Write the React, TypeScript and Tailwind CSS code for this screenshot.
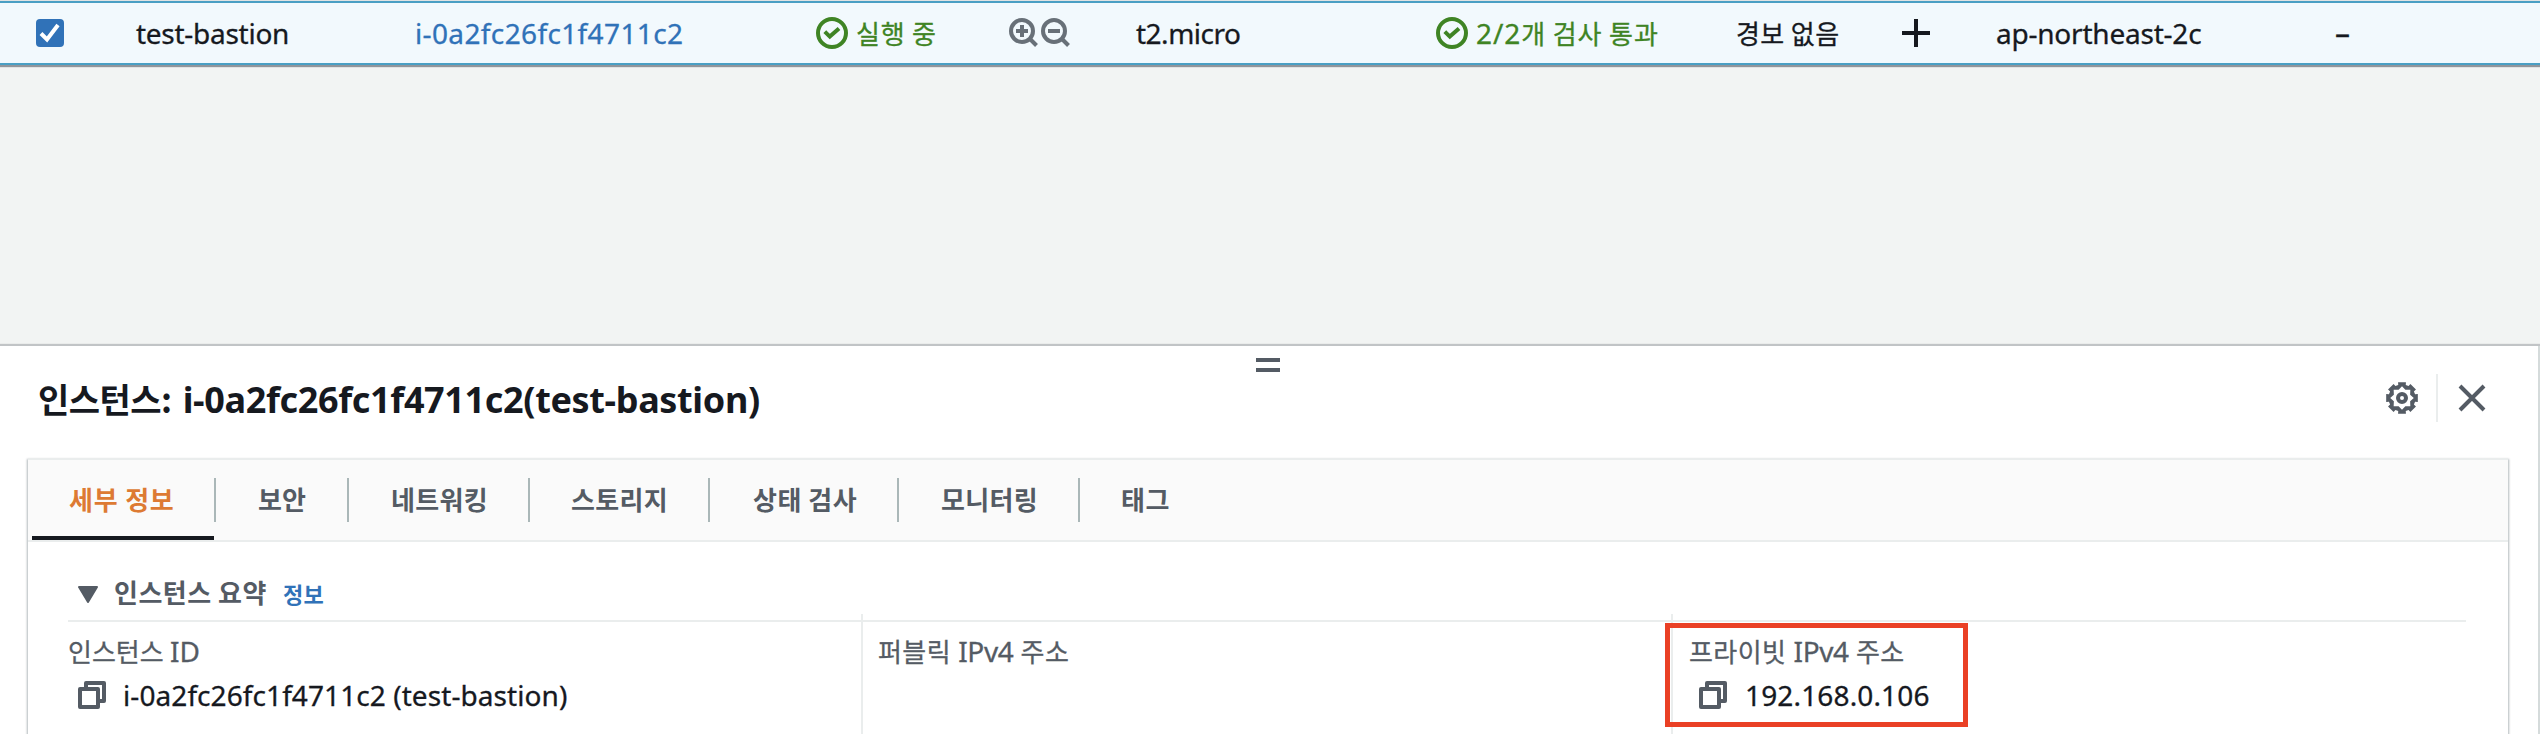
import type { ReactNode } from "react";

function CheckCircle() {
  return (
    <svg width="32" height="32" viewBox="0 0 32 32" fill="none" stroke="#3f8424" strokeWidth="4" className="shrink-0">
      <circle cx="16" cy="16" r="14" />
      <path d="M8.8 14.6l5 5L23 11.4" />
    </svg>
  );
}

function Magnifier({ plus = false }: { plus?: boolean }) {
  return (
    <svg width="30" height="30" viewBox="0 0 30 30" fill="none" stroke="#687078" strokeWidth="4" className="shrink-0">
      <circle cx="13" cy="13" r="11" />
      <path d="M20.5 20.5l7 7" />
      <path d="M7 13h12" />
      {plus && <path d="M13 7v12" />}
    </svg>
  );
}

const toPoints = (polar: number[][]) =>
  polar
    .map(([a, r]) => {
      const t = (a * Math.PI) / 180;
      return `${(16 + r * Math.cos(t)).toFixed(2)},${(16 + r * Math.sin(t)).toFixed(2)}`;
    })
    .join(" ");

const teeth = Array.from({ length: 8 }, (_, i) => i * 45);
const gearOutline = toPoints(teeth.flatMap((a) => [[a - 14, 16.3], [a + 14, 16.3], [a + 16, 13.6], [a + 29, 13.6]]));
const gearHollow = toPoints(teeth.flatMap((a) => [[a, 11.8], [a + 22.5, 8.8]]));

function Gear() {
  return (
    <svg width="32" height="32" viewBox="0 0 32 32">
      <polygon points={gearOutline} fill="#545b64" />
      <polygon points={gearHollow} fill="#fff" />
      <circle cx="16" cy="16" r="4" fill="none" stroke="#545b64" strokeWidth="4" />
    </svg>
  );
}

function CopyIcon() {
  return (
    <svg width="28" height="28" viewBox="0 0 28 28" fill="none" stroke="#545b64" strokeWidth="4" strokeLinejoin="round" className="shrink-0">
      <path d="M8 7V2h18v18h-5" />
      <path d="M2 8h18v18H2z" />
    </svg>
  );
}

function Ko({ children, className = "" }: { children: ReactNode; className?: string }) {
  return <span className={`font-['Noto_Sans_CJK_KR',sans-serif] text-[26px] ${className}`}>{children}</span>;
}

const tabs = [
  { label: "보안", width: "w-[133px]", pad: "pl-[42px]", track: "" },
  { label: "네트워킹", width: "w-[181px]", pad: "pl-[42px]", track: "tracking-[0.3px]" },
  { label: "스토리지", width: "w-[180px]", pad: "pl-[41px]", track: "tracking-[0.3px]" },
  { label: "상태 검사", width: "w-[189px]", pad: "pl-[43px]", track: "tracking-[0.5px]" },
  { label: "모니터링", width: "w-[181px]", pad: "pl-[42px]", track: "tracking-[0.3px]" },
  { label: "태그", width: "w-[120px]", pad: "pl-[41px]", track: "tracking-[0.5px]" },
];

function InstanceRow() {
  return (
    <div className="mt-px flex h-[64px] shrink-0 items-center whitespace-nowrap border-y-2 border-[#4a9fc4] bg-[#f2f9fd] pb-px leading-[40px] shadow-[0_1px_1px_1px_rgba(0,7,22,0.4)]">
      <div className="flex w-[136px] items-center pl-9">
        <span className="flex size-7 items-center justify-center rounded-[4px] bg-[#3072b8]">
          <svg width="28" height="28" viewBox="0 0 28 28" fill="none" stroke="#fff" strokeWidth="4">
            <path d="M5 14.5l6 6L22 6" />
          </svg>
        </span>
      </div>
      <div className="w-[279px] tracking-[-0.27px]">test-bastion</div>
      <div className="w-[401px] tracking-[0.37px] text-[#3072b8]">i-0a2fc26fc1f4711c2</div>
      <div className="flex w-[193px] items-center text-[#3f8424]">
        <CheckCircle />
        <Ko className="ml-2 tracking-[0.8px]">실행 중</Ko>
      </div>
      <div className="flex w-[127px] items-center gap-[2px]">
        <Magnifier plus />
        <Magnifier />
      </div>
      <div className="w-[300px] tracking-[-0.5px]">t2.micro</div>
      <div className="flex w-[300px] items-center text-[#3f8424]">
        <CheckCircle />
        <span className="ml-2 tracking-[0.9px]">2/2<Ko>개 검사 통과</Ko></span>
      </div>
      <div className="w-[166px]">
        <Ko className="tracking-[0.4px]">경보 없음</Ko>
      </div>
      <div className="w-[94px]">
        <svg width="28" height="28" viewBox="0 0 28 28" stroke="#16191f" strokeWidth="4">
          <path d="M0 14h28M14 0v28" />
        </svg>
      </div>
      <div className="w-[339px] tracking-[-0.22px]">ap-northeast-2c</div>
      <div className="text-[30px]">–</div>
    </div>
  );
}

export default function App() {
  return (
    <div className="flex h-[734px] w-[2540px] flex-col overflow-hidden bg-[#f2f4f3] font-['Noto_Sans','Noto_Sans_CJK_KR',sans-serif] text-[28px] text-[#16191f] [-webkit-text-stroke-width:0.3px]">
      <InstanceRow />

      <section className="mt-[281px] flex flex-1 flex-col border-r-2 border-[#d5dbdb] bg-white shadow-[0_-1px_1px_1px_rgba(0,7,22,0.2)]">
        <div className="flex h-[23px] flex-col items-center gap-[6px] pt-3">
          <span className="ml-[-2px] h-1 w-6 shrink-0 bg-[#545b64]" />
          <span className="ml-[-2px] h-1 w-6 shrink-0 bg-[#545b64]" />
        </div>

        <header className="flex h-[89px] items-start justify-between pl-[38px] pr-[52px] pt-[5px] [-webkit-text-stroke-width:0px]">
          <h2 className="flex items-baseline whitespace-nowrap text-[36px] font-bold leading-[50px]">
            <span className="font-['Noto_Sans_CJK_KR',sans-serif] text-[34px] tracking-[-0.5px]">인스턴스:</span>
            <span className="ml-[11px] tracking-[-0.35px]">i-0a2fc26fc1f4711c2(test-bastion)</span>
          </h2>
          <div className="flex h-12 items-center">
            <Gear />
            <span className="ml-[18px] mr-[20px] h-12 w-[2px] bg-[#eaeded]" />
            <svg width="28" height="28" viewBox="0 0 28 28" stroke="#545b64" strokeWidth="4">
              <path d="M2 2l24 24M26 2L2 26" />
            </svg>
          </div>
        </header>

        <div className="ml-7 mr-[30px] flex flex-1 flex-col border-t-2 border-[#eaeded] bg-white shadow-[0_2px_2px_1px_rgba(0,28,36,0.3)]">
          <nav className="flex h-[82px] shrink-0 items-center border-b-2 border-[#eaeded] bg-[#fafafa] pl-1 text-[26px] font-bold text-[#545b64] [-webkit-text-stroke-width:0px]">
            <div className="flex h-20 w-[182px] items-center border-b-4 border-[#16191f] pl-[37px]">
              <Ko className="tracking-[0.8px] text-[#dd7a33]">세부 정보</Ko>
            </div>
            {tabs.map((t) => (
              <div key={t.label} className={`flex h-11 items-center border-l-2 border-[#aab7b8] pb-[4px] ${t.pad} ${t.width}`}>
                <Ko className={t.track}>{t.label}</Ko>
              </div>
            ))}
          </nav>

          <div className="ml-10 mr-[42px] flex flex-1 flex-col">
            <div className="flex h-[80px] shrink-0 items-baseline whitespace-nowrap border-b-2 border-[#eaeded] pl-[10px] pt-[30px] font-bold leading-[40px] text-[#545b64] [-webkit-text-stroke-width:0px]">
              <svg width="20" height="17" viewBox="0 0 20 17" fill="#545b64" stroke="#545b64" strokeWidth="2" strokeLinejoin="round">
                <path d="M1 1h18L10 16z" />
              </svg>
              <Ko className="ml-4 tracking-[0.5px]">인스턴스 요약</Ko>
              <span className="ml-[16px] font-['Noto_Sans_CJK_KR',sans-serif] text-[22px] tracking-[0.4px] text-[#3072b8]">정보</span>
            </div>

            <div className="mt-[-8px] flex flex-1 whitespace-nowrap leading-[44px]">
              <div className="w-[793px] pt-[15px]">
                <div className="h-11 text-[#545b64]"><Ko>인스턴스</Ko> <span className="ml-[-1px]">ID</span></div>
                <div className="flex h-11 items-center pl-[10px]">
                  <CopyIcon />
                  <span className="ml-[17px] tracking-[0.08px]">i-0a2fc26fc1f4711c2 (test-bastion)</span>
                </div>
              </div>
              <div className="w-[810px] border-l-2 border-[#eaeded] pl-[15px] pt-[15px]">
                <div className="h-11 text-[#545b64]"><Ko className="tracking-[0.4px]">퍼블릭</Ko> <span className="tracking-[-0.4px]">IPv4</span> <Ko className="tracking-[0.4px]">주소</Ko></div>
              </div>
              <div className="relative flex-1 border-l-2 border-[#eaeded] pl-[16px] pt-[15px]">
                <div className="h-11 text-[#545b64]"><Ko className="tracking-[0.4px]">프라이빗</Ko> <span className="tracking-[-0.4px]">IPv4</span> <Ko className="tracking-[0.4px]">주소</Ko></div>
                <div className="flex h-11 items-center pl-[10px]">
                  <CopyIcon />
                  <span className="ml-[18px] tracking-[0.15px]">192.168.0.106</span>
                </div>
                <div className="absolute left-[-8px] top-[9px] h-[104px] w-[303px] border-5 border-[#ea4025]" />
              </div>
            </div>
          </div>
        </div>
      </section>
    </div>
  );
}
